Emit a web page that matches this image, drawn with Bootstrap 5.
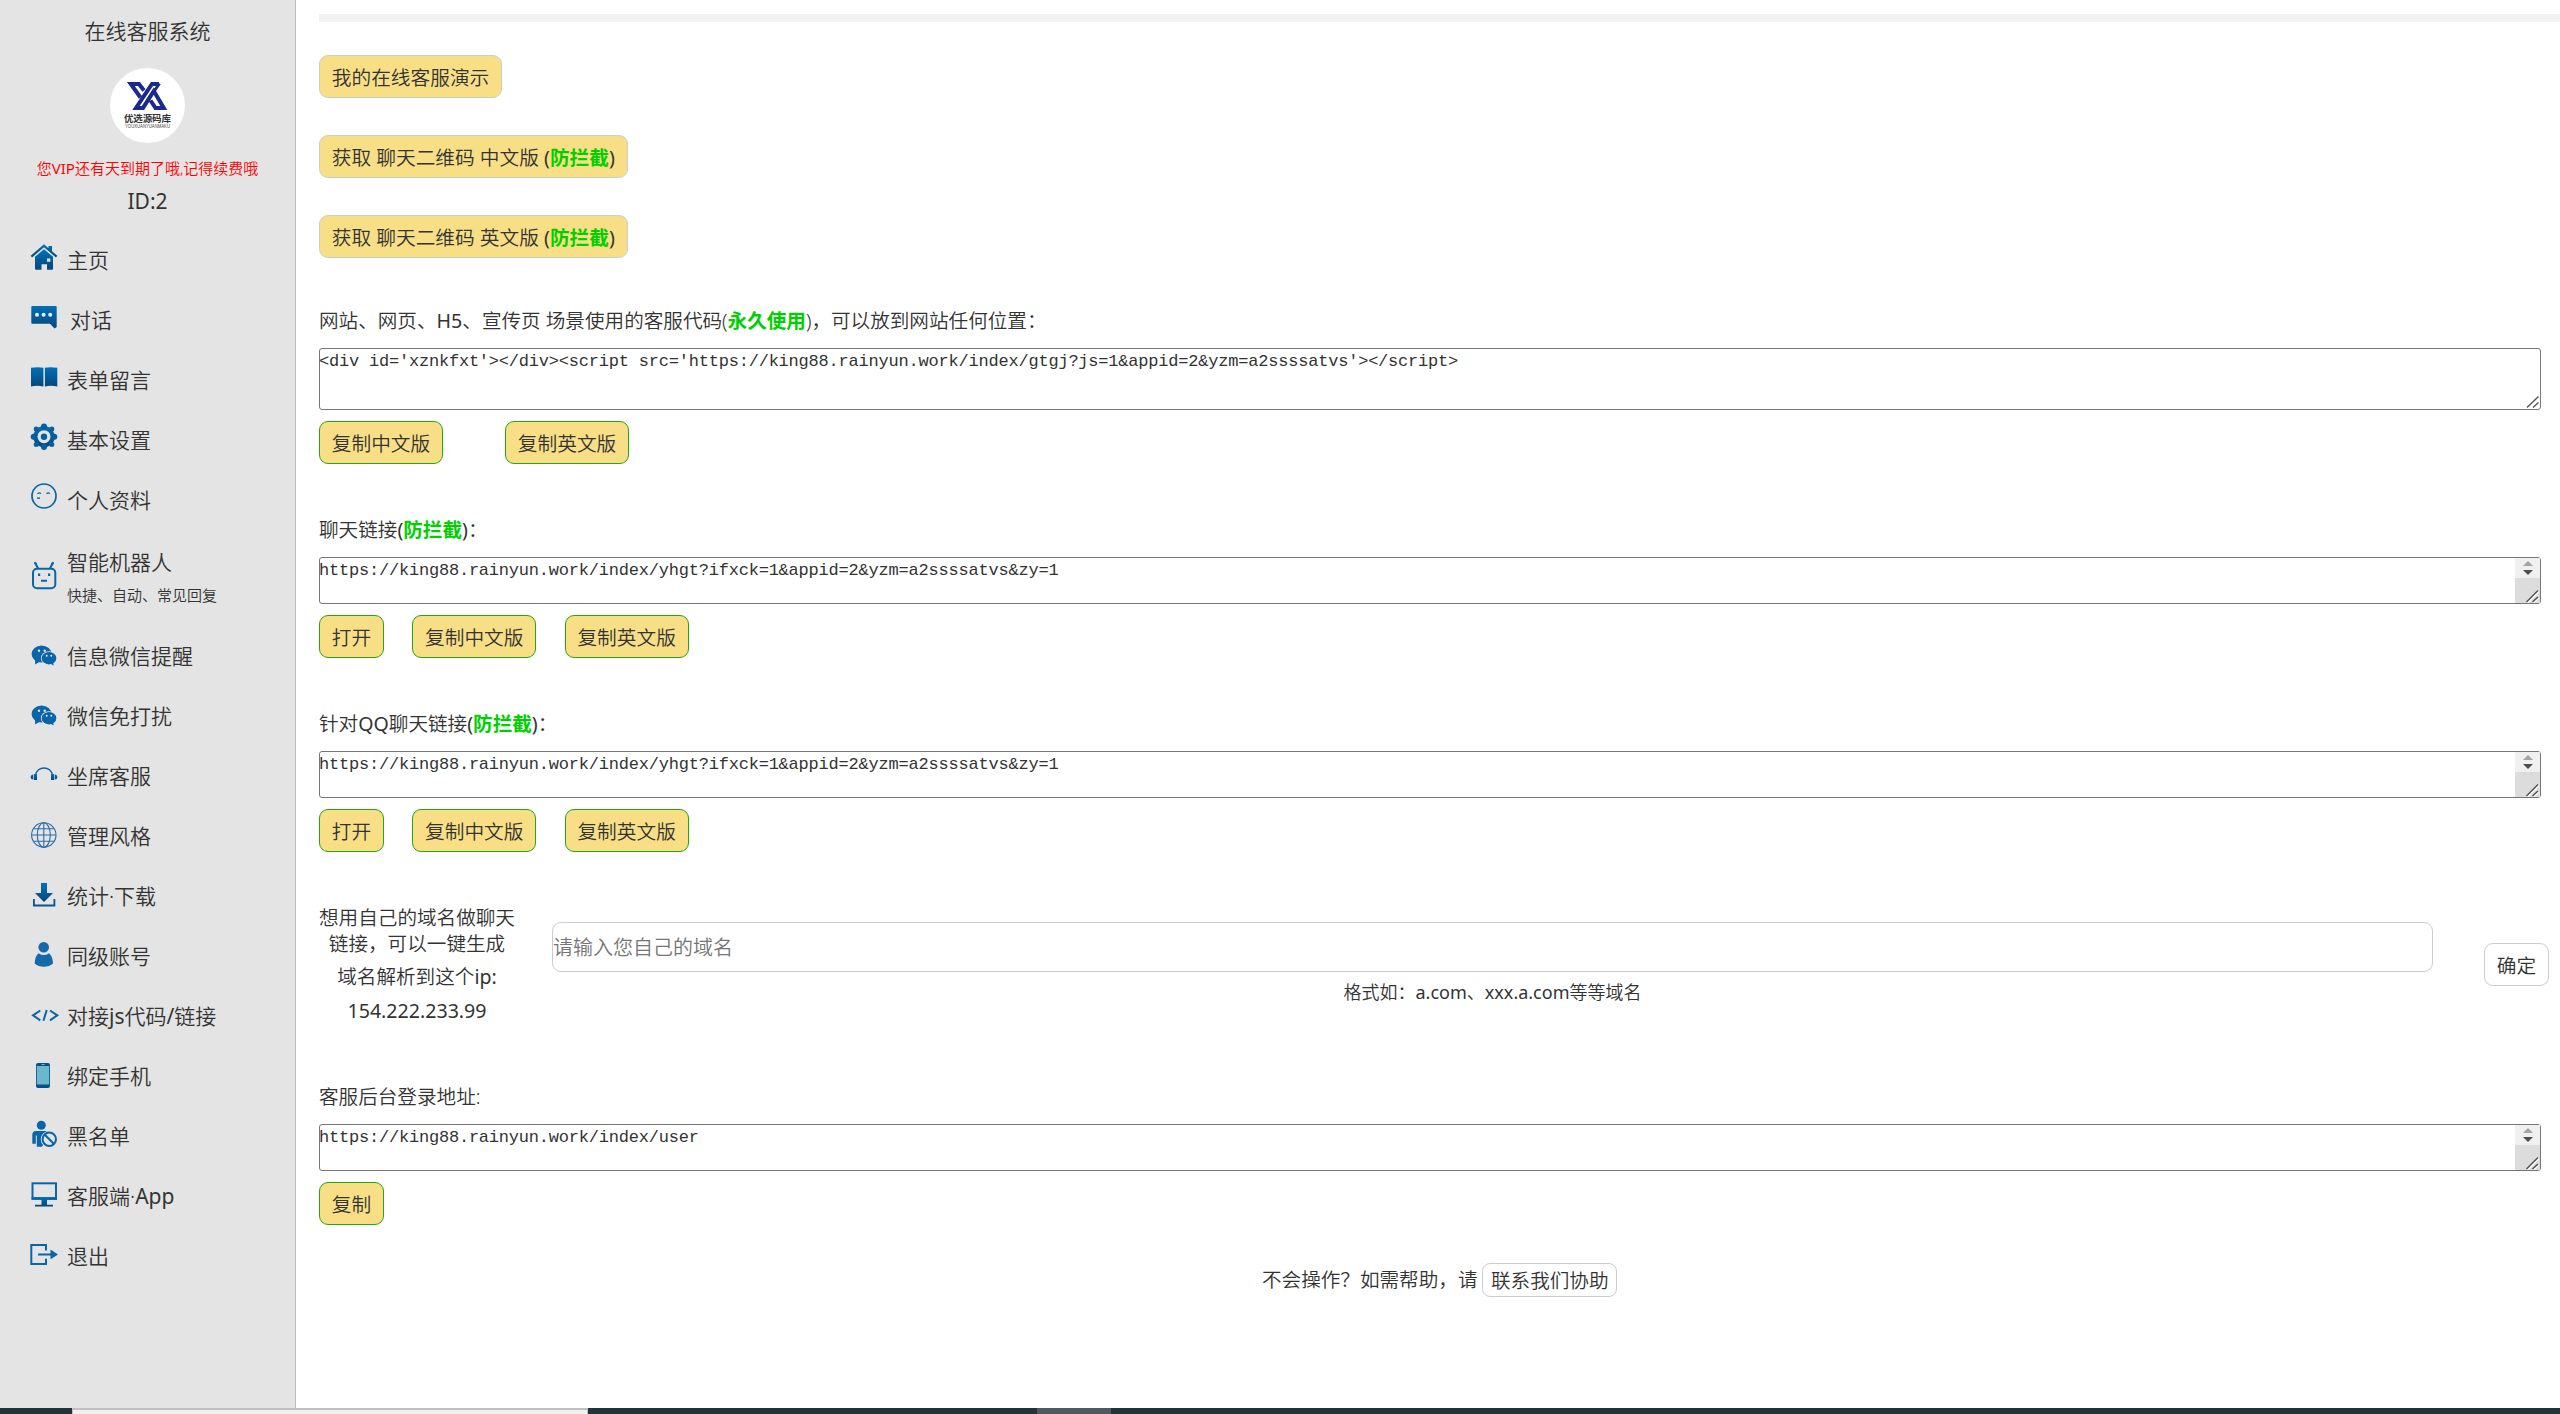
<!DOCTYPE html>
<html lang="zh-CN">
<head>
<meta charset="utf-8">
<title>在线客服系统</title>
<link href="https://cdn.jsdelivr.net/npm/bootstrap@5.3.0/dist/css/bootstrap.min.css" rel="stylesheet">
<style>
body{font-family:"Noto Sans","Noto Sans CJK SC",sans-serif;font-size:19.6px;color:#333;background:#fff;height:1414px;overflow:hidden}
i{font-style:normal;font-weight:400}
.shell{height:1408px}
.side{width:296px;background:#e4e4e4;border-right:1px solid #bdbdbd;font-size:21px;font-weight:350}
.side-title{line-height:30px;padding-top:16px;height:68px}
.logo{width:75px;height:75px}
.vip{font-size:15px;line-height:20px;color:#f00;margin-top:15px;height:25px}
.uid{line-height:30px;height:46.5px;padding-top:3px}
.menu-row{height:60px;padding-left:30px;line-height:30px;color:#333;text-decoration:none}
.menu-row svg{width:28px;height:28px;margin-right:9px;margin-top:-5px;overflow:visible;flex:none}
.menu-row.robot{height:96.5px}
.menu-row.robot span{margin-top:-3px}
.menu-row.robot small{font-size:15px;line-height:20px;display:block;margin-top:8px}
.blue{fill:url(#gb)}
.line{fill:none;stroke:#0a65a8;stroke-width:2}
.pane{padding-left:23px;font-weight:350}
.rule{height:8px;background:#f2f2f2;margin-top:14px;margin-bottom:33px}
.ybtn{--bs-btn-font-size:19.7px;--bs-btn-line-height:29px;--bs-btn-padding-x:11.8px;--bs-btn-bg:#f8df85;--bs-btn-color:#333;--bs-btn-border-color:#ccc;--bs-btn-border-radius:9px;--bs-btn-hover-bg:#f5d76d;--bs-btn-font-weight:350;height:43px;padding-top:7px;padding-bottom:5px;display:block;width:max-content;white-space:nowrap}
.ybtn.demo{margin-bottom:37px}
.ybtn.go{--bs-btn-border-color:#22a90f}
.ybtn.plain{--bs-btn-bg:#fff}
.pane b{color:#00d000;font-weight:700}
.cap{line-height:30px;height:42px}
.box{width:2222px;border:1px solid #767676;border-radius:3px;font-family:"Liberation Mono",monospace;font-size:17px;letter-spacing:-.21px;line-height:26px;color:#333;margin-bottom:11px;font-weight:400}
.box span{margin-left:-1px}
.box.tall{height:62px}
.box.low{height:47px}
.ask{font-size:19.6px;line-height:26px;width:196px;margin-right:37px;white-space:nowrap}
.dom{width:1881px;height:50px;border:1px solid #ccc;border-radius:9px;padding:0;font-size:20px;font-weight:350;color:#333;display:block}
.dom::placeholder{color:#757575;opacity:1}
.hint{font-size:18px;line-height:26px;margin-top:7px}
.helpbtn{border:1px solid #ccc;border-radius:8px;height:34px;line-height:33px;padding:0 7.5px;margin-left:5px}
.strip{height:6px;background:#22333a}
.strip .w1{width:72px}
.strip .w2{width:516px;background:#f1f1f1;border:solid #c0c0c0;border-width:2px 1px 0}
.strip .w3{width:74px;background:#4f5a60;margin-left:449px}
</style>
<script src="https://cdn.jsdelivr.net/npm/bootstrap@5.3.0/dist/js/bootstrap.bundle.min.js"></script>
</head>
<body>
<svg width="0" height="0" class="position-absolute">
<defs>
<linearGradient id="gb" x1="0" y1="0" x2="0" y2="1"><stop offset="0" stop-color="#0070b8"/><stop offset="1" stop-color="#07477a"/></linearGradient>
<symbol id="wx" viewBox="0 0 28 28"><g fill="#0a65a8"><ellipse cx="11.6" cy="14" rx="10" ry="8.6"/><path d="M5 20 5.2 24.6 10 21.5z"/><ellipse cx="19" cy="18.2" rx="8.1" ry="7" fill="#e4e4e4"/><ellipse cx="19" cy="18.2" rx="7.3" ry="6.2"/><path d="M20 23.5 23.6 25.6 23.2 22z"/></g><g fill="#e4e4e4"><circle cx="9" cy="10.8" r="1.2"/><circle cx="14.7" cy="10.8" r="1.2"/><circle cx="16.7" cy="15.8" r="1"/><circle cx="21.3" cy="15.8" r="1"/></g></symbol>
<symbol id="grip" viewBox="0 0 14 14"><path d="M1 12.5 12.5 1.5M7 12.5 12.5 7.5" stroke="#555" stroke-width="1.4" fill="none"/></symbol>
<symbol id="bar" viewBox="0 0 25 45"><path fill="#f0f0f0" d="M0 0h25v20H0z"/><path fill="#dcdcdc" d="M0 20h25v25H0z"/><path fill="#a3a3a3" d="M13 3 18 8H8z"/><path fill="#4d4d4d" d="M13 17 8 12h10z"/><path d="M11.5 44 23 32.5M17.5 44 23 39" stroke="#fff" stroke-width="1.4" transform="translate(1 1)"/><path d="M11.5 44 23 32.5M17.5 44 23 39" stroke="#505050" stroke-width="1.4"/></symbol>
</defs>
</svg>
<div class="shell d-flex">
<nav class="side flex-shrink-0">
<div class="side-title text-center">在线客服系统</div>
<svg class="logo d-block mx-auto" viewBox="0 0 75 75">
<circle cx="37.5" cy="37.5" r="37.5" fill="#fff"/>
<g fill="none" stroke="#1a2a8c" stroke-width="4">
<path d="M34 22.500 29 16H20.800L30.500 29.500"/>
<path d="M49 16H42L26 39.900H33L43.800 23 53.800 39.900H45.500L40.500 32.500"/>
<path d="M49.500 15.500 38 32" stroke-width="3"/>
</g>
<text x="37.5" y="53.5" font-size="9.5" font-weight="700" font-family="Noto Sans CJK SC" text-anchor="middle" fill="#333" textLength="47">优选源码库</text>
<text x="37.5" y="60" font-size="4.500" font-family="Liberation Sans" text-anchor="middle" fill="#444" textLength="45" lengthAdjust="spacingAndGlyphs">YOUXUANYUANMAKU</text>
</svg>
<div class="vip text-center">您<i>VIP</i>还有天到期了哦,记得续费哦</div>
<div class="uid text-center"><i>ID:2</i></div>

<a class="menu-row d-flex align-items-center"><svg viewBox="0 0 28 28"><path class="blue" d="M14 1.300 0.700 12.800 2 14.400 14 4.300 26 14.400 27.300 12.800 22 8.200V3H18.500V5.200z"/><path class="blue" fill-rule="evenodd" d="M14 6.200 23 13.800V25.500Q23 26.700 22 26.700H17V21.200H11.500V26.700H6Q5 26.700 5 25.500V13.800zM17 15.500V18.700H20.300V15.500z"/></svg>主页</a>
<a class="menu-row d-flex align-items-center"><svg viewBox="0 0 28 28" style="margin-right:12px"><path class="blue" d="M2.300 3H25.700Q26.700 3 26.700 4V24L24.500 25.500 20 20.700H2.300Q1.300 20.700 1.300 19.700V4Q1.300 3 2.300 3z"/><g fill="#e8eef3"><circle cx="7" cy="11.800" r="2"/><circle cx="13.600" cy="11.800" r="2"/><circle cx="20.200" cy="11.800" r="2"/></g></svg>对话</a>
<a class="menu-row d-flex align-items-center"><svg viewBox="0 0 28 28"><path class="blue" d="M1 4.800Q8 3.600 13.400 4.800V23.400Q7 22 1 23.400zM14.900 4.800Q20 3.600 27.300 4.800V23.400Q21 22 14.900 23.400z"/></svg>表单留言</a>
<a class="menu-row d-flex align-items-center"><svg viewBox="0 0 28 28"><path fill-rule="evenodd" fill="url(#gb)" d="M14 3A10.700 10.700 0 1 0 14 24.400 10.700 10.700 0 1 0 14 3M14 7.200A6.500 6.500 0 1 1 14 20.200 6.500 6.500 0 1 1 14 7.200"/><g fill="#075d9d"><circle cx="14" cy="13.700" r="3.200"/><circle cx="14" cy="3.500" r="3"/><circle cx="14" cy="23.900" r="3"/><circle cx="3.700" cy="13.700" r="3"/><circle cx="24.300" cy="13.700" r="3"/><circle cx="6.200" cy="6" r="2.500"/><circle cx="21.800" cy="6" r="2.500"/><circle cx="6.200" cy="21.400" r="2.500"/><circle cx="21.800" cy="21.400" r="2.500"/></g></svg>基本设置</a>
<a class="menu-row d-flex align-items-center"><svg viewBox="0 0 28 28"><circle class="line" cx="14" cy="13" r="12" style="stroke-width:1.7"/><path class="line" style="stroke-width:1.2" d="M7.500 10.700Q9.300 9 11 10.700M16.500 10.700Q18.300 9 20 10.700"/><path d="M7 14.200H10V16H7z" fill="#3b7fb8"/></svg>个人资料</a>
<a class="menu-row robot d-flex align-items-center"><svg viewBox="0 0 28 28"><rect class="line" x="3" y="7.700" width="22.300" height="19.500" rx="4"/><path class="line" d="M5 1.200 8 7.500M23 1.200 20 7.500M11 19.800H17"/><path fill="#0a65a8" d="M8 12.500h2.200v2.400H8zM18 12.500h2.200v2.400H18zM4 1 7 2.500 5 4.500zM24 1 21 2.500 23 4.500z"/></svg><span>智能机器人<small>快捷、自动、常见回复</small></span></a>
<a class="menu-row d-flex align-items-center"><svg><use href="#wx"/></svg>信息微信提醒</a>
<a class="menu-row d-flex align-items-center"><svg><use href="#wx"/></svg>微信免打扰</a>
<a class="menu-row d-flex align-items-center"><svg viewBox="0 0 28 28"><path class="line" d="M5.500 15.500C7 5.500 21 5.500 22.500 15.500" style="stroke-width:1.6"/><path class="blue" d="M4 14H7V20H4zM21 14H24V20H21zM3.300 14.500V19.500Q.7 19.500 .7 17T3.300 14.500M24.700 14.500V19.500Q27.300 19.500 27.300 17T24.700 14.500"/></svg>坐席客服</a>
<a class="menu-row d-flex align-items-center"><svg viewBox="0 0 28 28"><g class="line" style="stroke-width:1.1;stroke:#2b6da8"><circle cx="13.800" cy="15" r="12.200"/><ellipse cx="13.800" cy="15" rx="6.500" ry="12.200"/><path d="M13.800 2.800V27.200M1.600 15H26M3.500 8.700H24M3.500 21.300H24"/></g></svg>管理风格</a>
<a class="menu-row d-flex align-items-center"><svg viewBox="0 0 28 28"><path class="blue" d="M11 3H17V13H23L14 22 5 13H11z"/><path fill="#0a558f" d="M3 19H4.800V24.500H23.500V19H25.300V26.500H3z"/></svg>统计·下载</a>
<a class="menu-row d-flex align-items-center"><svg viewBox="0 0 28 28"><g fill="#1369a9"><circle cx="13.700" cy="7.300" r="5.300"/><path d="M8.500 13.200Q13.700 17 19 13.200 23 16.500 23 23.500 19 26.800 13.800 26.800T4.700 23.500Q4.700 16.500 8.500 13.200z"/></g></svg>同级账号</a>
<a class="menu-row d-flex align-items-center"><svg viewBox="0 0 28 28"><path class="line" d="M10.300 10.500 3 15.300 10.300 20.300M16.700 10 13.500 20.700M20 10.500 27.300 15.300 20 20.300"/></svg>对接<i>js</i>代码<i>/</i>链接</a>
<a class="menu-row d-flex align-items-center"><svg viewBox="0 0 28 28"><rect x="6" y="3" width="14" height="25" rx="2" fill="#07518a"/><path d="M6.800 6H19.200V24.500H6.800z" fill="#6bb8cc"/><path d="M11.500 4.500H14.500" stroke="#9cc" stroke-width=".8"/></svg>绑定手机</a>
<a class="menu-row d-flex align-items-center"><svg viewBox="0 0 28 28"><g fill="#0a65a8"><circle cx="11.300" cy="5.300" r="4.500"/><path d="M6 11H16Q19 11 20 12.500L12 26.700H6.800V15.500H5.800V23.800H2.300V15Q2.300 11 6 11z"/></g><circle cx="19.300" cy="19.300" r="6.800" fill="#e4e4e4" stroke="#e4e4e4" stroke-width="3.500"/><circle class="line" cx="19.300" cy="19.300" r="6.700"/><path class="line" d="M14.800 14.800 24 24"/></svg>黑名单</a>
<a class="menu-row d-flex align-items-center"><svg viewBox="0 0 28 28"><rect class="line" x="2.500" y="3.300" width="23.500" height="15.500"/><path class="blue" d="M1.600 17H27V19.800H17V24.800H23V26.500H5V24.800H11.500V19.800H1.600z"/></svg>客服端·<i>App</i></a>
<a class="menu-row d-flex align-items-center"><svg viewBox="0 0 28 28"><path class="line" d="M16 10.500V5H1.300V24H16V18.800M8 14.500H21"/><path fill="#0a65a8" d="M20.500 9.500 28 14.500 20.500 19.200z"/></svg>退出</a>
</nav>
<main class="pane flex-grow-1">
<div class="rule"></div>
<a class="btn ybtn demo">我的在线客服演示</a>
<a class="btn ybtn demo">获取 聊天二维码 中文版 <i>(</i><b>防拦截</b><i>)</i></a>
<a class="btn ybtn">获取 聊天二维码 英文版 <i>(</i><b>防拦截</b><i>)</i></a>
<div class="cap" style="margin-top:48px">网站、网页、<i>H5</i>、宣传页 场景使用的客服代码(<b>永久使用</b>)，可以放到网站任何位置：</div>
<div class="box tall d-flex justify-content-between"><span>&lt;div id='xznkfxt'&gt;&lt;/div&gt;&lt;script src='https://king88.rainyun.work/index/gtgj?js=1&amp;appid=2&amp;yzm=a2ssssatvs'&gt;&lt;/script&gt;</span><svg class="align-self-end" width="14" height="14"><use href="#grip"/></svg></div>
<div class="d-flex" style="gap:62px"><a class="btn ybtn go">复制中文版</a><a class="btn ybtn go">复制英文版</a></div>
<div class="cap" style="margin-top:51px">聊天链接<i>(</i><b>防拦截</b><i>)</i>：</div>
<div class="box low d-flex justify-content-between"><span>https://king88.rainyun.work/index/yhgt?ifxck=1&amp;appid=2&amp;yzm=a2ssssatvs&amp;zy=1</span><svg width="25" height="45"><use href="#bar"/></svg></div>
<div class="d-flex" style="gap:28.3px"><a class="btn ybtn go">打开</a><a class="btn ybtn go">复制中文版</a><a class="btn ybtn go">复制英文版</a></div>
<div class="cap" style="margin-top:51px">针对<i>QQ</i>聊天链接<i>(</i><b>防拦截</b><i>)</i>：</div>
<div class="box low d-flex justify-content-between"><span>https://king88.rainyun.work/index/yhgt?ifxck=1&amp;appid=2&amp;yzm=a2ssssatvs&amp;zy=1</span><svg width="25" height="45"><use href="#bar"/></svg></div>
<div class="d-flex" style="gap:28.3px"><a class="btn ybtn go">打开</a><a class="btn ybtn go">复制中文版</a><a class="btn ybtn go">复制英文版</a></div>
<div class="d-flex align-items-start" style="margin-top:53px;height:177px">
<div class="ask text-center"><div>想用自己的域名做聊天<br>链接，可以一键生成</div><div style="margin-top:7px">域名解析到这个<i>ip:</i></div><div style="margin-top:8px"><i>154.222.233.99</i></div></div>
<div style="margin-top:17px"><input class="dom" placeholder="请输入您自己的域名"><div class="hint text-center">格式如：<i>a.com</i>、<i>xxx.a.com</i>等等域名</div></div>
<a class="btn ybtn plain" style="margin:38px 0 0 51px">确定</a>
</div>
<div class="cap">客服后台登录地址:</div>
<div class="box low d-flex justify-content-between"><span>https://king88.rainyun.work/index/user</span><svg width="25" height="45"><use href="#bar"/></svg></div>
<a class="btn ybtn go">复制</a>
<div class="d-flex justify-content-center align-items-center" style="margin-top:38px">不会操作？如需帮助，请<span class="helpbtn">联系我们协助</span></div>
</main>
</div>
<div class="strip d-flex"><div class="w1"></div><div class="w2"></div><div class="w3"></div></div>
</body>
</html>
